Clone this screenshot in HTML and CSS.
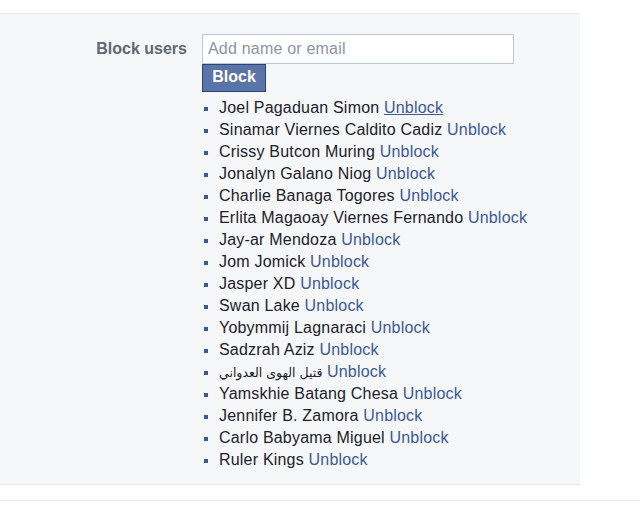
FILE: index.html
```html
<!DOCTYPE html>
<html>
<head>
<meta charset="utf-8">
<link rel="stylesheet" href="styles.css">
</head>
<body>
<div class="top"></div>
<section class="panel">
  <div class="label">Block users</div>
  <div class="content">
    <input class="field" type="text" placeholder="Add name or email">
    <button class="btn">Block</button>
    <ul class="list">
      <li>Joel Pagaduan Simon <a class="hover" href="#">Unblock</a></li>
      <li>Sinamar Viernes Caldito Cadiz <a href="#">Unblock</a></li>
      <li>Crissy Butcon Muring <a href="#">Unblock</a></li>
      <li>Jonalyn Galano Niog <a href="#">Unblock</a></li>
      <li>Charlie Banaga Togores <a href="#">Unblock</a></li>
      <li>Erlita Magaoay Viernes Fernando <a href="#">Unblock</a></li>
      <li>Jay-ar Mendoza <a href="#">Unblock</a></li>
      <li>Jom Jomick <a href="#">Unblock</a></li>
      <li>Jasper XD <a href="#">Unblock</a></li>
      <li>Swan Lake <a href="#">Unblock</a></li>
      <li>Yobymmij Lagnaraci <a href="#">Unblock</a></li>
      <li>Sadzrah Aziz <a href="#">Unblock</a></li>
      <li><span class="ar" dir="rtl">قتيل الهوى العدواني</span> <a href="#">Unblock</a></li>
      <li>Yamskhie Batang Chesa <a href="#">Unblock</a></li>
      <li>Jennifer B. Zamora <a href="#">Unblock</a></li>
      <li>Carlo Babyama Miguel <a href="#">Unblock</a></li>
      <li>Ruler Kings <a href="#">Unblock</a></li>
    </ul>
  </div>
</section>
<div class="rule"></div>
</body>
</html>
```
FILE: styles.css
```css
html, body {
  margin: 0;
  padding: 0;
  background: #fff;
  font-family: "Liberation Sans", Arial, sans-serif;
}
.top {
  height: 13px;
}
.panel {
  width: 580px;
  background: #f6f7f9;
  border-top: 1px solid #e9eaed;
  border-bottom: 1px solid #e9eaed;
  display: grid;
  grid-template-columns: 187px 1fr;
  column-gap: 15px;
  padding: 20px 0 13px;
  box-sizing: border-box;
}
.label {
  text-align: right;
  font-weight: bold;
  font-size: 16px;
  color: #606770;
  line-height: 30px;
}
.content {
  display: flex;
  flex-direction: column;
  align-items: flex-start;
}
.field {
  width: 312px;
  height: 30px;
  box-sizing: border-box;
  border: 1px solid #bdc7d8;
  background: #fff;
  margin: 0;
  padding: 0 5px;
  font-family: "Liberation Sans", Arial, sans-serif;
  font-size: 16px;
  letter-spacing: 0.2px;
  color: #1d2129;
  outline: none;
}
.field::placeholder {
  color: #8d949e;
}
.btn {
  width: 64px;
  height: 28px;
  box-sizing: border-box;
  margin: 0;
  padding: 0 0 2px;
  background: #5b74a8;
  border: 1px solid #29447e;
  color: #fff;
  font-family: "Liberation Sans", Arial, sans-serif;
  font-weight: bold;
  font-size: 16px;
}
.list {
  margin: 5px 0 0;
  padding: 0 0 0 17px;
  list-style: square;
  font-size: 16px;
  letter-spacing: 0.2px;
  line-height: 22px;
  color: #1d2129;
}
.list li::marker {
  color: #3b5998;
  font-size: 14px;
}
.list a {
  color: #3b5998;
  text-decoration: none;
}
.list a.hover {
  text-decoration: underline;
}
.ar {
  font-family: "DejaVu Sans", sans-serif;
  font-size: 12.5px;
  letter-spacing: 0;
  line-height: 12px;
}
.rule {
  height: 0;
  margin-top: 15px;
  border-top: 1px solid #e9eaed;
}
```
